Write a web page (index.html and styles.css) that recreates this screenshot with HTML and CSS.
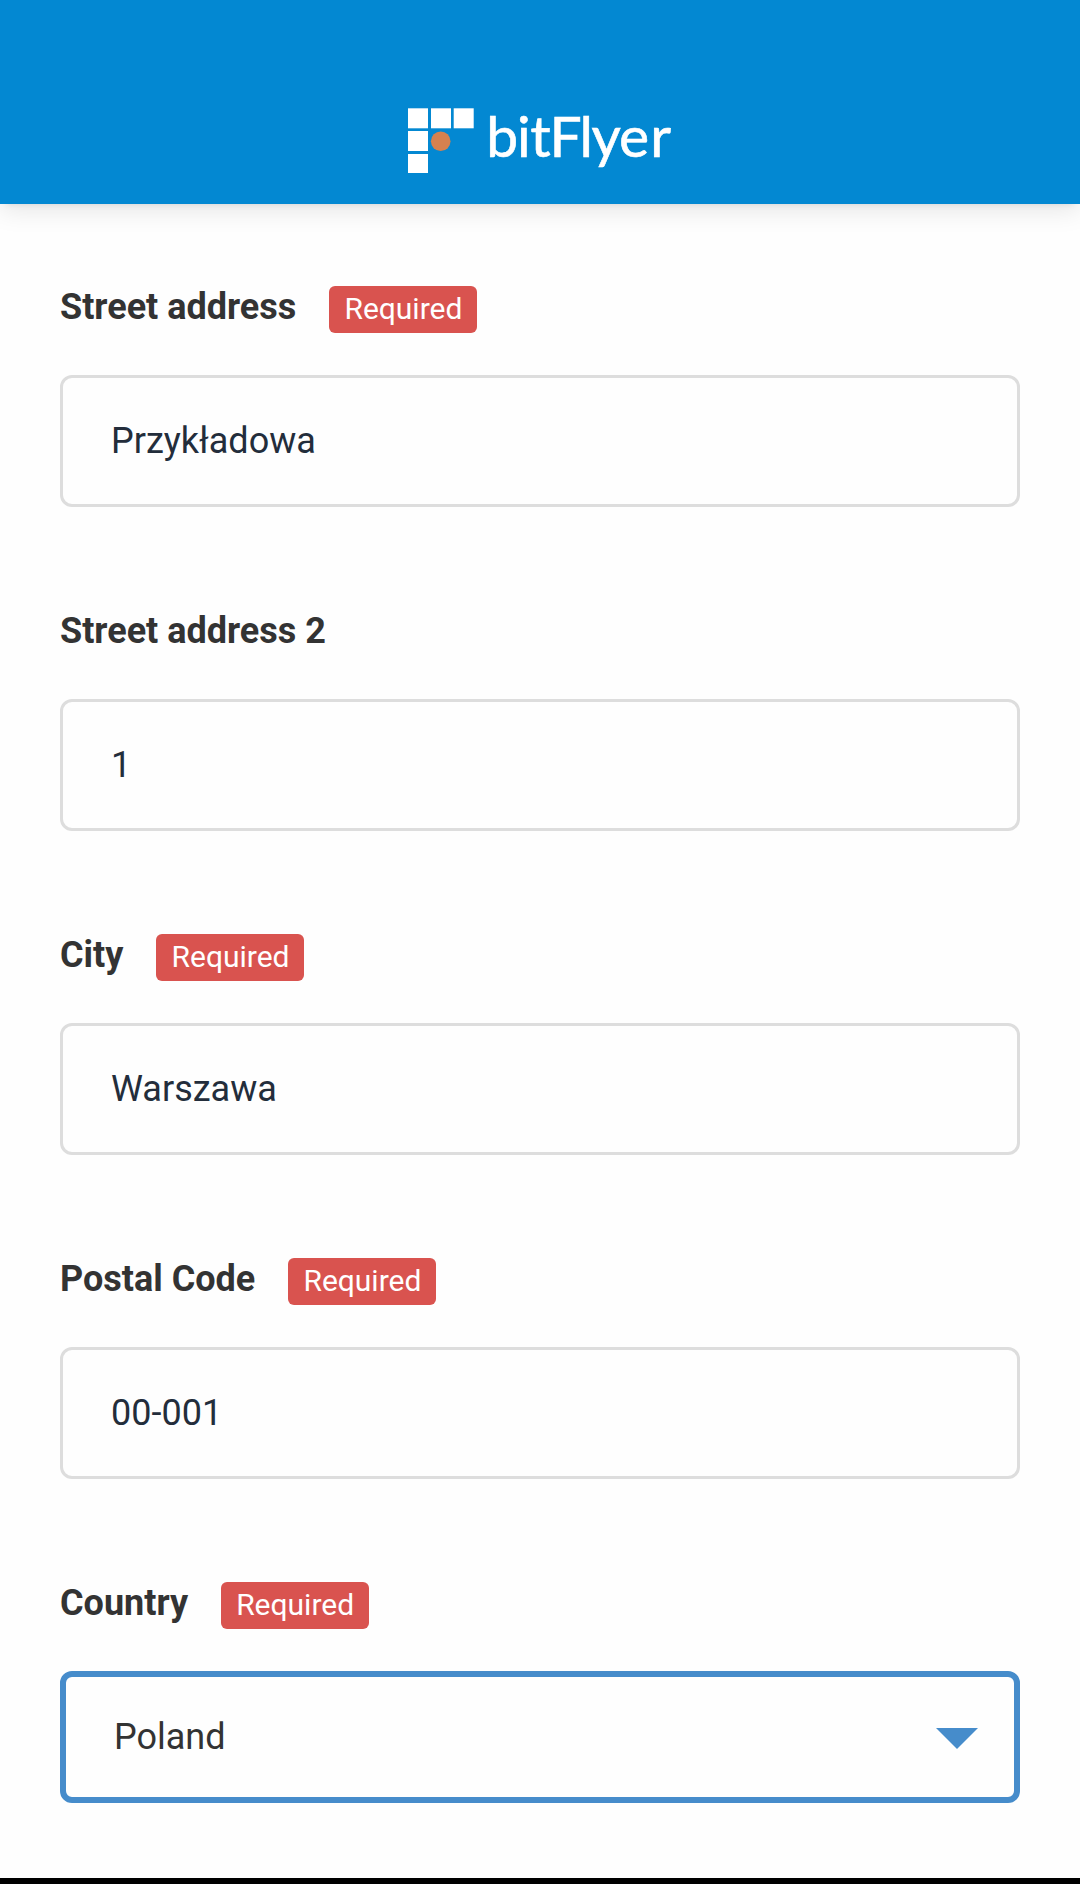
FILE: index.html
```html
<!DOCTYPE html>
<html lang="en">
<head>
<meta charset="utf-8">
<title>bitFlyer</title>
<link rel="stylesheet" href="styles.css">
</head>
<body>
<header class="header">
  <svg class="logo" width="266" height="80" viewBox="0 0 266 80" role="img" aria-label="bitFlyer">
    <g fill="#fff">
      <rect x="0" y="0.3" width="20" height="20"/>
      <rect x="23" y="0.3" width="20" height="20"/>
      <rect x="45.7" y="0.3" width="20" height="20"/>
      <rect x="0" y="23" width="20" height="20"/>
      <rect x="0" y="46" width="20" height="19"/>
    </g>
    <circle cx="32.7" cy="33.2" r="9.8" fill="#d5814f"/>
    <text class="wordmark" y="48.5" x="78.2 108.9 122.2 141.6 171.4 183.4 211.1 242.3">bitFlyer</text>
  </svg>
</header>
<main class="form">
  <div class="field">
    <div class="label-row"><label class="label" for="street">Street address</label><span class="badge">Required</span></div>
    <input class="control" id="street" type="text" value="Przykładowa">
  </div>
  <div class="field">
    <div class="label-row"><label class="label" for="street2">Street address 2</label></div>
    <input class="control" id="street2" type="text" value="1">
  </div>
  <div class="field">
    <div class="label-row"><label class="label" for="city">City</label><span class="badge">Required</span></div>
    <input class="control" id="city" type="text" value="Warszawa">
  </div>
  <div class="field">
    <div class="label-row"><label class="label" for="postal">Postal Code</label><span class="badge">Required</span></div>
    <input class="control" id="postal" type="text" value="00-001">
  </div>
  <div class="field">
    <div class="label-row"><span class="label">Country</span><span class="badge">Required</span></div>
    <div class="control control-select"><span>Poland</span><svg class="caret" width="42" height="21" viewBox="0 0 42 21"><path d="M0 0H42L21 21Z" fill="#468ccb"/></svg></div>
  </div>
</main>
<footer class="bottom-bar"></footer>
</body>
</html>
```
FILE: styles.css
```css
* { box-sizing: border-box; }
body {
  margin: 0;
  height: 1884px;
  display: flex;
  flex-direction: column;
  background: #fefefe;
  color: #333;
  font-family: Roboto, "Liberation Sans", sans-serif;
  overflow: hidden;
}
.header {
  flex: none;
  height: 204px;
  padding: 108px 0 0 408px;
  background: #0388d2;
  box-shadow: 0 6px 6px -6px rgba(0, 0, 0, 0.1), 0 6px 24px rgba(0, 0, 0, 0.1);
}
.logo { display: block; overflow: visible; }
.wordmark {
  font-family: Lato, sans-serif;
  font-size: 57px;
  fill: #fff;
  stroke: #fff;
  stroke-width: 0.6px;
}
.form {
  flex: 1;
  padding: 82px 60px 0;
  display: flex;
  flex-direction: column;
  gap: 103px;
}
.field { display: flex; flex-direction: column; gap: 42px; }
.label-row {
  height: 47px;
  display: flex;
  align-items: baseline;
  gap: 33.1px;
}
.label { font-size: 36px; font-weight: 700; line-height: 43px; }
.badge {
  height: 47px;
  padding: 0 15px;
  border-radius: 6px;
  background: #d9534f;
  color: #fff;
  font-size: 30px;
  line-height: 46px;
}
.control {
  display: block;
  width: 100%;
  height: 132px;
  padding: 0 48px;
  border: 3px solid #ddd;
  border-radius: 12px;
  background: #fefefe;
  color: #232d3b;
  font-family: inherit;
  font-size: 36px;
  line-height: 42px;
  outline: none;
}
.control-select {
  display: flex;
  align-items: center;
  justify-content: space-between;
  padding: 0 36px 0 48px;
  border: 6px solid #468ccb;
  color: #333;
}
.caret { margin-top: 3px; }
.bottom-bar { flex: none; height: 6px; background: #000; }
```
